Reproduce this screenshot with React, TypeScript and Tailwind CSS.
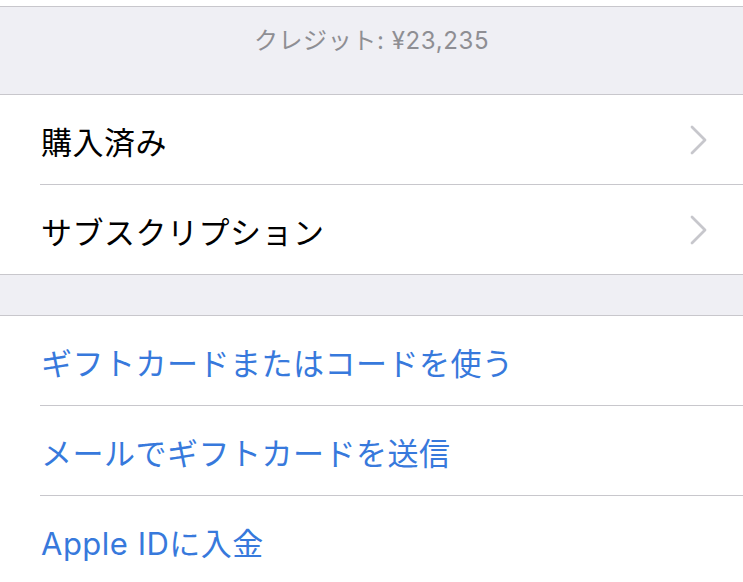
// ============================================
// APP: ACCOUNT SETTINGS LIST
// ============================================

const FONT = { fontFamily: '"Inter", "Noto Sans CJK JP", sans-serif' }

function Chevron() {
  return (
    <svg width="20" height="30" viewBox="0 0 20 30" fill="none" className="mr-[34px]">
      <path
        d="M3 2 L16 15 L3 28"
        stroke="#c7c7cc"
        strokeWidth="2.8"
        strokeLinecap="round"
        strokeLinejoin="round"
      />
    </svg>
  )
}

function Row({
  label,
  blue,
  arrow,
}: {
  label: string
  blue?: boolean
  arrow?: boolean
}) {
  return (
    <div className="flex h-[89px] items-center justify-between bg-white pl-[41px]">
      <span
        className={`pt-[6px] text-[31px] leading-none tracking-[0.5px] ${
          blue ? 'text-[#3779dc]' : 'text-black'
        }`}
      >
        {label}
      </span>
      {arrow && <Chevron />}
    </div>
  )
}

function Inset() {
  return (
    <div className="bg-white pl-10">
      <div className="h-px bg-[#c8c7cc]" />
    </div>
  )
}

export default function App() {
  return (
    <div className="h-[582px] w-[743px] overflow-hidden bg-white" style={FONT}>
      <div className="h-[6px] bg-white" />
      <div className="h-px bg-[#c8c7cc]" />

      {/* CRÉDITO */}
      <div className="flex h-[87px] justify-center bg-[#efeff4] pt-[22px]">
        <span className="text-[24px] leading-none tracking-[0.6px] text-[#8e8e93]">
          クレジット: ¥23,235
        </span>
      </div>
      <div className="h-px bg-[#c8c7cc]" />

      {/* COMPRAS */}
      <Row label="購入済み" arrow />
      <Inset />
      <Row label="サブスクリプション" arrow />
      <div className="h-px bg-[#c8c7cc]" />

      <div className="h-[40px] bg-[#efeff4]" />
      <div className="h-px bg-[#c8c7cc]" />

      {/* TARJETAS */}
      <Row label="ギフトカードまたはコードを使う" blue />
      <Inset />
      <Row label="メールでギフトカードを送信" blue />
      <Inset />
      <Row label="Apple IDに入金" blue />
    </div>
  )
}
